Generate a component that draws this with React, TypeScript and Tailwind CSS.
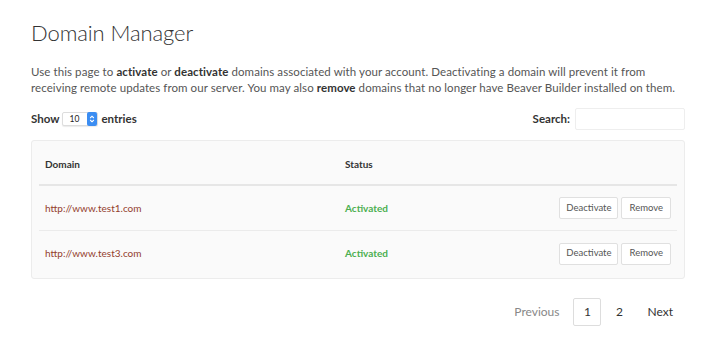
export default function App() {
  const rows = ["http://www.test1.com", "http://www.test3.com"];
  return (
    <div className="w-[716px] h-[344px] bg-white px-[31px] pt-[19px] font-['Lato',_'Liberation_Sans',_sans-serif] text-[#555]">
      <h1 className="text-[22px] font-light leading-[28px] text-[#333] tracking-[-0.1px]">
        Domain Manager
      </h1>
      <p className="mt-[17px] text-[11.5px] leading-[16px] tracking-[0.08px] text-[#555] whitespace-nowrap">
        Use this page to <b className="font-bold text-[#333]">activate</b> or{" "}
        <b className="font-bold text-[#333]">deactivate</b> domains associated with your account. Deactivating a
        domain will prevent it from
        <br />
        receiving remote updates from our server. You may also{" "}
        <b className="font-bold text-[#333]">remove</b> domains that no longer have Beaver Builder installed on them.
      </p>
      <div className="mt-[12px] flex items-center justify-between h-[22px]">
        <div className="flex items-center gap-[3px] text-[11.5px] font-bold text-[#333]">
          <span>Show</span>
          <div className="flex items-center h-[14px] w-[36px] border border-[#ddd] rounded-[2px] bg-white shadow-[0_1px_1px_rgba(0,0,0,0.08)]">
            <span className="flex-1 pl-[6px] text-[8.5px] font-normal text-[#222]">10</span>
            <span className="w-[10px] h-[14px] -my-px rounded-[2px] bg-[#3b8df2] flex flex-col items-center justify-center text-white">
              <svg width="6" height="10" viewBox="0 0 6 10" fill="none" stroke="white" strokeWidth="1.1">
                <path d="M1.2 4 L3 2.2 L4.8 4" />
                <path d="M1.2 6 L3 7.8 L4.8 6" />
              </svg>
            </span>
          </div>
          <span>entries</span>
        </div>
        <div className="flex items-center gap-[5px] text-[11.5px] font-bold text-[#333]">
          <span>Search:</span>
          <div className="w-[110px] h-[22px] border border-[#eee] rounded-[2px] bg-white" />
        </div>
      </div>
      <div className="mt-[10px] border border-[#ececec] rounded-[3px] bg-[#fafafa] px-[7px] pb-[2px]">
        <div className="flex items-center h-[45px] pt-[3px] border-b-2 border-[#e6e6e6] px-[6px] text-[10px] font-bold text-[#333]">
          <span className="w-[300px]">Domain</span>
          <span>Status</span>
        </div>
        {rows.map((r, i) => (
          <div
            key={r}
            className={`flex items-center h-[45px] px-[6px] text-[10px] ${i === 0 ? "border-b border-[#ebebeb]" : ""}`}
          >
            <span className="w-[300px] text-[#94402d]">{r}</span>
            <span className="flex-1 font-bold text-[#4caf50]">Activated</span>
            <div className="flex gap-[3px]">
              <button className="h-[22px] px-[6px] border border-[#e0e0e0] rounded-[2px] bg-white text-[9.5px] text-[#555]">
                Deactivate
              </button>
              <button className="h-[22px] px-[7px] border border-[#e0e0e0] rounded-[2px] bg-white text-[9.5px] text-[#555]">
                Remove
              </button>
            </div>
          </div>
        ))}
      </div>
      <div className="mt-[19px] flex justify-end items-center pr-[12px] text-[12px] text-[#555]">
        <span className="text-[#888] mr-[14px]">Previous</span>
        <span className="w-[28px] h-[28px] flex items-center justify-center border border-[#ddd] rounded-[2px] bg-white text-[#333]">
          1
        </span>
        <span className="w-[36px] text-center text-[#333]">2</span>
        <span className="ml-[10px] text-[#333]">Next</span>
      </div>
    </div>
  );
}
